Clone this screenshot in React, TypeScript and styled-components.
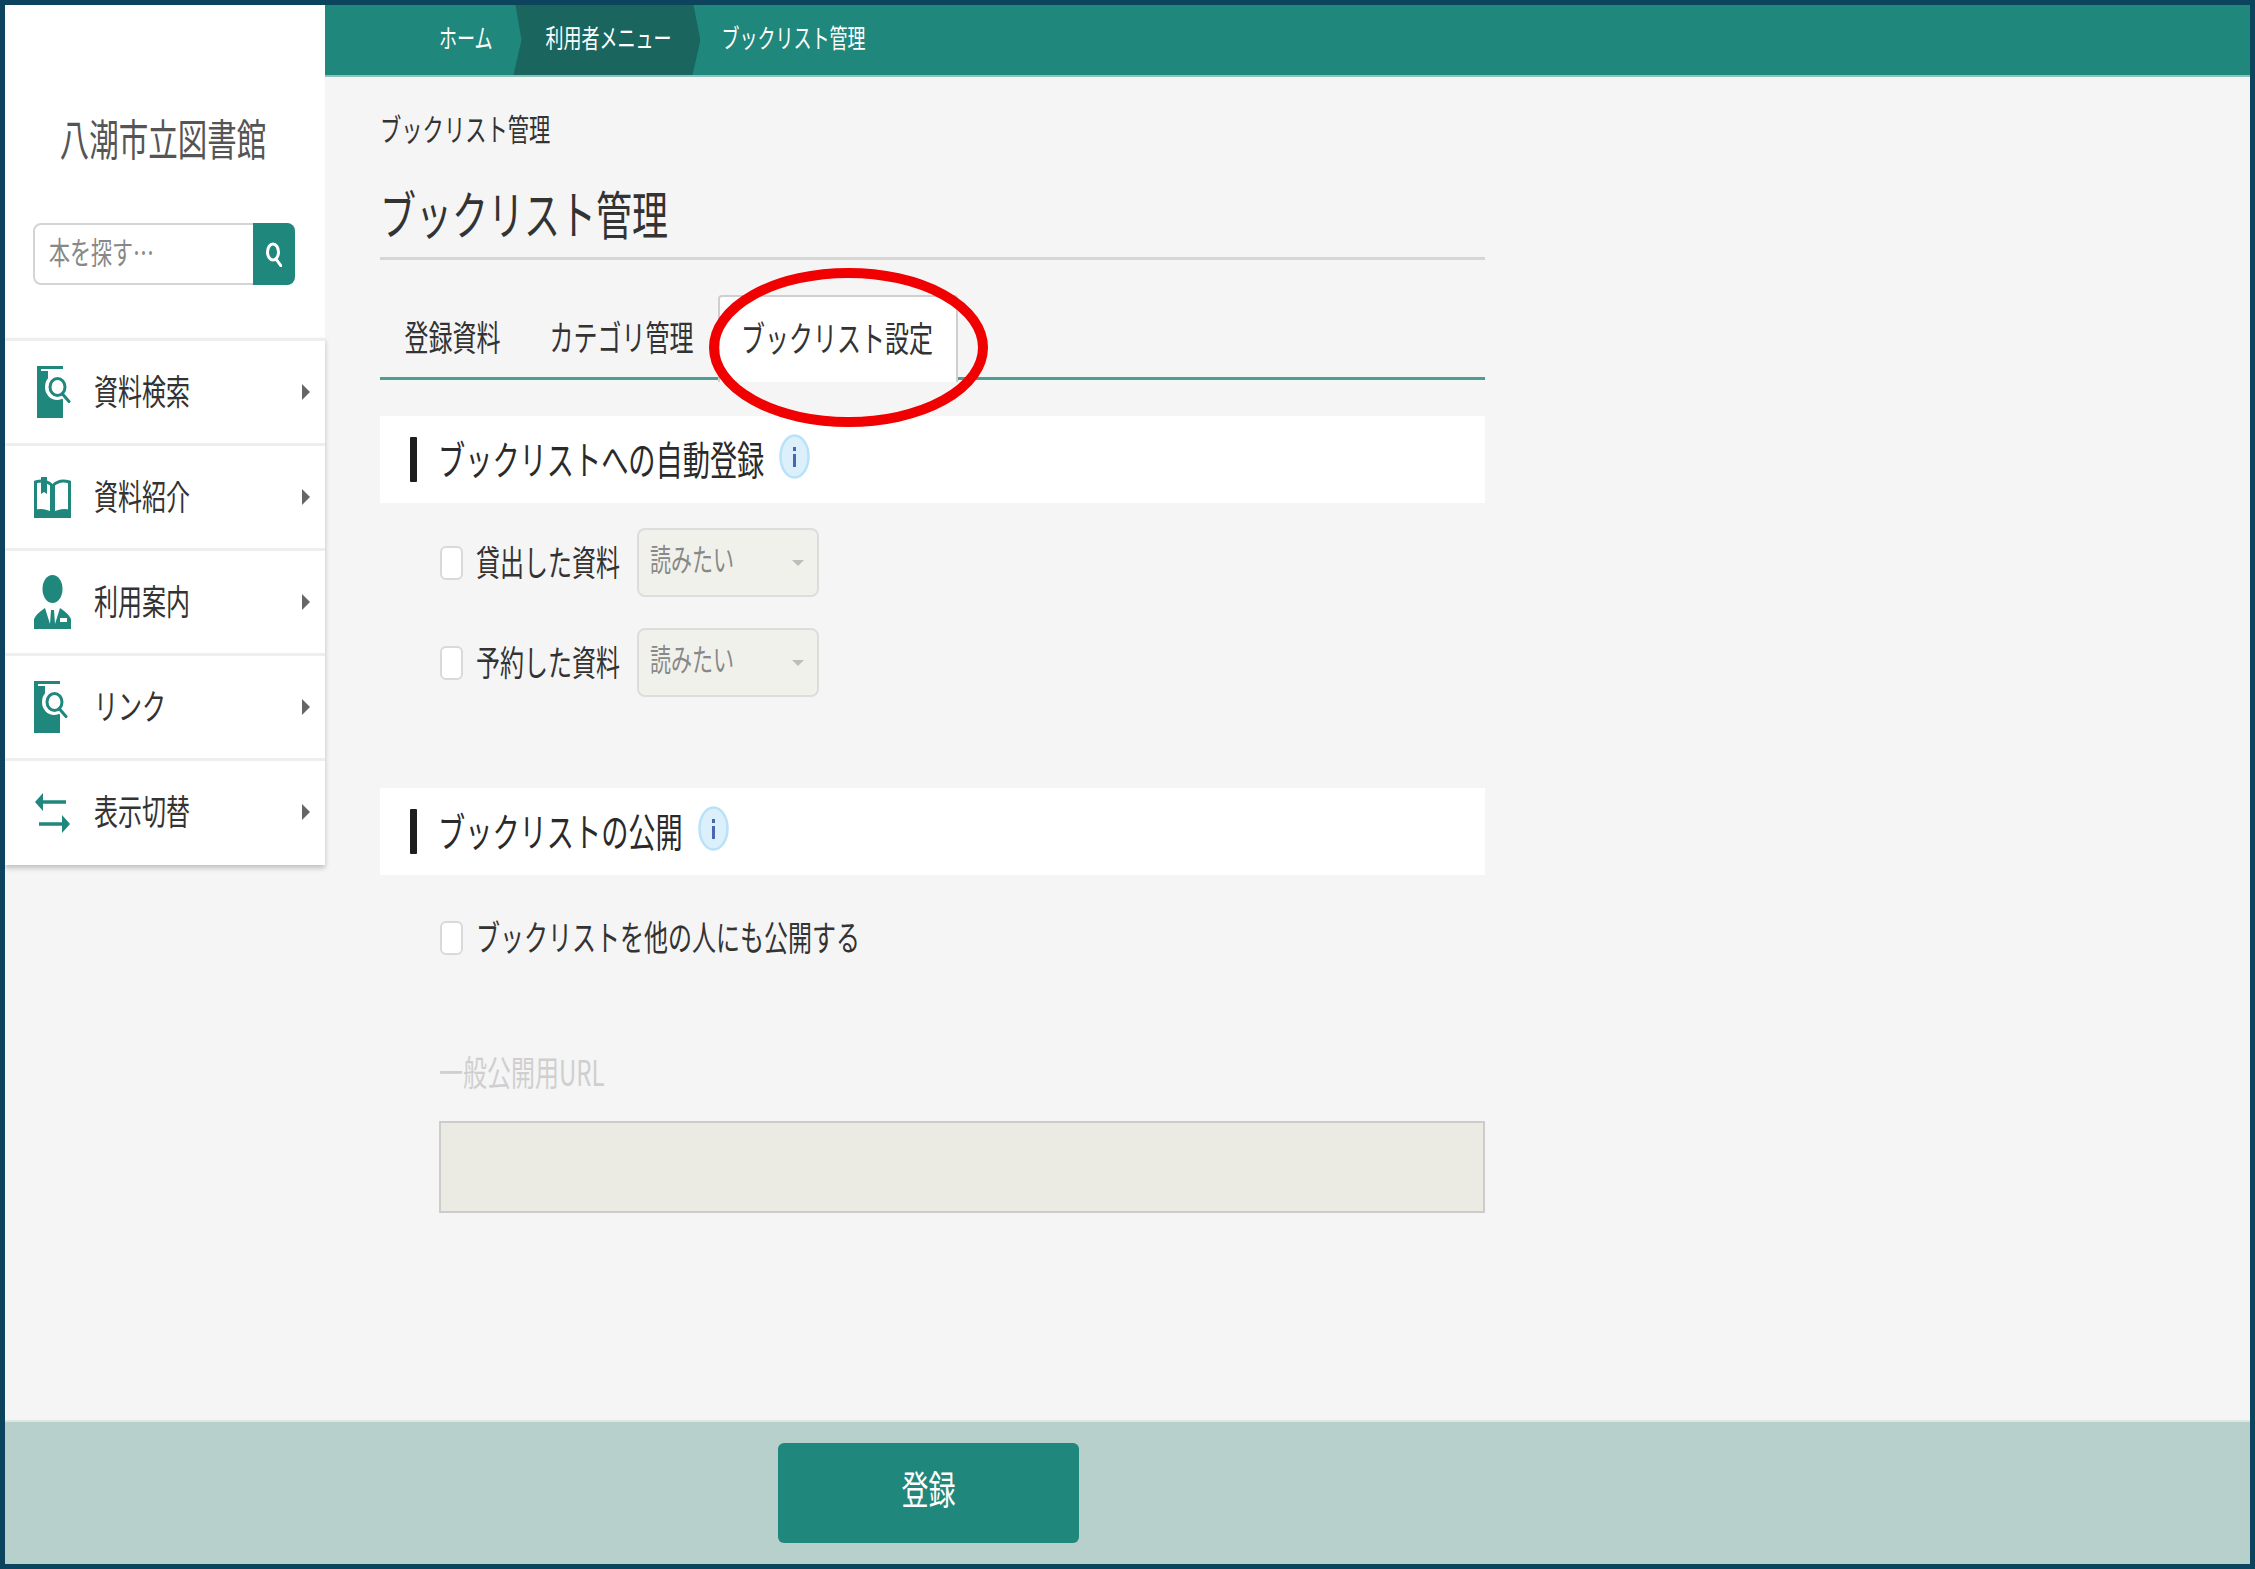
import styled, { createGlobalStyle, css } from 'styled-components';

const GlobalStyle = createGlobalStyle`
  html, body {
    margin: 0;
    padding: 0;
  }
  * {
    box-sizing: border-box;
  }
`;

// the reference is stretched vertically, so its text is taller than wide
const tall = css`
  display: inline-block;
  transform: translateY(-3px) scaleY(1.45);
  white-space: nowrap;
`;

const Frame = styled.div`
  width: 2255px;
  height: 1569px;
  display: flex;
  flex-direction: column;
  border: 5px solid #0c445e;
  background: #f5f5f5;
  font-family: "Noto Sans CJK JP", "Noto Sans", sans-serif;
  color: #333;
  overflow: hidden;
`;

const Body = styled.div`
  flex: 1;
  display: flex;
  min-height: 0;
`;

const Sidebar = styled.aside`
  width: 320px;
  flex-shrink: 0;
`;

const Brand = styled.div`
  height: 333px;
  background: #fff;
  display: flex;
  flex-direction: column;
  align-items: center;
`;

const LibraryName = styled.div`
  ${tall}
  margin: 115px 4px 0 0;
  font-size: 29.5px;
  line-height: 40px;
  color: #555;
`;

const SearchBox = styled.div`
  margin: 63px 2px 0 0;
  width: 262px;
  height: 62px;
  display: flex;
  border: 2px solid #d4d4d4;
  border-radius: 8px;
  background: #fff;
`;

const SearchHint = styled.div`
  flex: 1;
  padding-left: 14px;
  display: flex;
  align-items: center;
  font-size: 21px;
  color: #888;
  span {
    ${tall}
  }
`;

const SearchButton = styled.div`
  width: 42px;
  margin: -2px -2px -2px 0;
  display: flex;
  align-items: center;
  justify-content: center;
  background: #20877d;
  border-radius: 0 8px 8px 0;
`;

const Nav = styled.nav`
  padding-bottom: 2px;
  background: #fff;
  box-shadow: 0 3px 5px rgba(0, 0, 0, 0.22);
`;

const NavItem = styled.div`
  height: 105px;
  padding: 0 15px 0 29px;
  display: flex;
  align-items: center;
  border-top: 3px solid #eeeeee;
`;

const NavIcon = styled.div<{ $end?: boolean }>`
  width: 37px;
  display: flex;
  justify-content: ${(p) => (p.$end ? 'flex-end' : 'flex-start')};
  color: #20877d;
`;

const NavLabel = styled.span`
  ${tall}
  flex: 1;
  margin-left: 23px;
  font-size: 24px;
  color: #333;
`;

const NavArrow = styled.span`
  width: 0;
  height: 0;
  border-left: 8px solid #666;
  border-top: 8px solid transparent;
  border-bottom: 8px solid transparent;
`;

const Main = styled.main`
  flex: 1;
  min-width: 0;
`;

const TopBar = styled.div`
  height: 72px;
  padding: 0 0 0 114px;
  display: flex;
  align-items: stretch;
  background: #20877d;
  border-bottom: 2px solid #8fc1ba;
`;

const Crumb = styled.div<{ $current?: boolean }>`
  display: flex;
  align-items: center;
  padding-bottom: 2px;
  font-size: 18px;
  color: #fff;
  padding-left: ${(p) => (p.$current ? '32px' : '0')};
  padding-right: ${(p) => (p.$current ? '29px' : '21px')};
  background: ${(p) => (p.$current ? '#1a665f' : 'transparent')};
  ${(p) =>
    p.$current &&
    css`
      clip-path: polygon(2px 0, calc(100% - 7px) 0, 100% 50%, calc(100% - 8px) 100%, 0 100%, 8px 50%);
      margin-right: 21px;
    `}
  span {
    ${tall}
  }
`;

const Content = styled.div`
  width: 1160px;
  padding: 23px 0 0 55px;
`;

const PageLabel = styled.div`
  height: 60px;
  display: flex;
  align-items: center;
  font-size: 21.3px;
  span {
    ${tall}
  }
`;

const Heading = styled.h1`
  margin: 0;
  height: 100px;
  padding-top: 13px;
  display: flex;
  align-items: center;
  font-size: 36px;
  font-weight: 400;
  border-bottom: 3px solid #d6d6d6;
  span {
    ${tall}
  }
`;

const Tabs = styled.div`
  position: relative;
  margin-top: 35px;
  height: 85px;
  display: flex;
  align-items: flex-start;
  border-bottom: 3px solid #4a9e92;
`;

const Tab = styled.div<{ $active?: boolean }>`
  position: relative;
  height: 87px;
  padding: ${(p) => (p.$active ? '0 23px 0 21px' : '0 24.500px')};
  display: flex;
  align-items: center;
  font-size: 24px;
  ${(p) =>
    p.$active &&
    css`
      background: #fff;
      border: 2px solid #cfcfcf;
      border-bottom: 0;
      border-radius: 4px 4px 0 0;
    `}
  span {
    ${tall}
  }
`;

const RedCircle = styled.svg`
  position: absolute;
  left: 329px;
  top: -27px;
  width: 279px;
  height: 159px;
`;

const SectionHead = styled.div<{ $gap: number }>`
  margin-top: ${(p) => p.$gap}px;
  height: 87px;
  padding-left: 30px;
  display: flex;
  align-items: center;
  background: #fff;
`;

const SectionBar = styled.div`
  width: 7px;
  height: 45px;
  background: #1e1e1e;
  border-radius: 1px;
`;

const SectionTitle = styled.h2`
  ${tall}
  margin: 2px 15px 0 21px;
  font-size: 27.2px;
  font-weight: 400;
  color: #2a2a2a;
`;

const InfoMark = styled.svg`
  margin-bottom: 7px;
`;

const FieldRow = styled.div<{ $gap: number }>`
  margin-top: ${(p) => p.$gap}px;
  padding-left: 60px;
  display: flex;
  align-items: center;
`;

const CheckBox = styled.span`
  width: 23px;
  height: 34px;
  flex-shrink: 0;
  background: #fff;
  border: 2px solid #d9d9d9;
  border-radius: 6px;
`;

const CheckLabel = styled.label`
  ${tall}
  margin: 2px 0 0 13px;
  font-size: 24px;
`;

const SelectBox = styled.div`
  margin-left: 17px;
  width: 182px;
  height: 69px;
  padding: 0 13px 4px 11px;
  display: flex;
  align-items: center;
  justify-content: space-between;
  background: #f1f1ec;
  border: 2px solid #dddddd;
  border-radius: 8px;
  font-size: 21px;
  color: #888;
  span {
    ${tall}
  }
  &::after {
    content: '';
    margin-top: 4px;
    border-top: 6px solid #bdbdbd;
    border-left: 6px solid transparent;
    border-right: 6px solid transparent;
  }
`;

const UrlLabel = styled.div`
  margin: 102px 0 33px 59px;
  height: 30px;
  display: flex;
  align-items: center;
  font-size: 24px;
  color: #cfcfcf;
  span {
    ${tall}
  }
`;

const UrlField = styled.div`
  margin-left: 59px;
  height: 92px;
  background: #ebebe4;
  border: 2px solid #cccccc;
`;

const Footer = styled.footer`
  height: 144px;
  flex-shrink: 0;
  padding-left: 773px;
  display: flex;
  align-items: center;
  background: #b8d0cb;
  border-top: 2px solid #dfe7e5;
`;

const SubmitButton = styled.button`
  width: 301px;
  height: 100px;
  padding: 0 0 5px;
  border: 0;
  border-radius: 6px;
  background: #20877d;
  color: #fff;
  font-family: inherit;
  font-size: 27px;
  span {
    ${tall}
  }
`;

const BookSearchIcon = () => (
  <svg width="34" height="52" viewBox="0 0 34 52">
    <rect width="26" height="52" fill="currentColor" />
    <rect x="4" y="3" width="22" height="2" fill="#fff" />
    <rect x="11" y="5" width="15" height="10" fill="#fff" />
    <ellipse cx="20" cy="21" rx="12" ry="13" fill="#fff" />
    <path d="M25 28l7 8" stroke="#fff" strokeWidth="6" />
    <ellipse cx="20.5" cy="21" rx="7.5" ry="8.5" fill="#fff" stroke="currentColor" strokeWidth="3" />
    <path d="M25.5 28l6.5 7.500" stroke="currentColor" strokeWidth="3" strokeLinecap="round" />
  </svg>
);

const OpenBookIcon = () => (
  <svg width="37" height="41" viewBox="0 0 37 41">
    <path d="M0 31h37v10H0z" fill="currentColor" />
    <path
      d="M1.500 5c6-2 12-1 16 3v29c-4-3-10-4-16-3zM35.500 5c-6-2-12-1-16 3v29c4-3 10-4 16-3z"
      fill="#fff"
      stroke="currentColor"
      strokeWidth="3"
    />
    <path d="M7 0h6v17l-3-2-3 2z" fill="currentColor" />
  </svg>
);

const PersonIcon = () => (
  <svg width="37" height="54" viewBox="0 0 37 54">
    <ellipse cx="18.500" cy="14" rx="10" ry="14" fill="currentColor" />
    <path d="M0 54V44q2-5 11-11l5 16 1-14h3l1 14 5-16q9 6 11 11v10z" fill="currentColor" />
    <rect x="26" y="43" width="7" height="4" fill="#fff" />
  </svg>
);

const SwapIcon = () => (
  <svg width="37" height="43" viewBox="0 0 37 43">
    <path d="M6 11h26M5 33h27" stroke="currentColor" strokeWidth="3.500" />
    <path d="M1 11l8-9v18zM36 33l-8-9v18z" fill="currentColor" />
  </svg>
);

const SearchIcon = () => (
  <svg width="16" height="25" viewBox="0 0 16 25" fill="none" stroke="#fff" strokeWidth="3">
    <ellipse cx="7" cy="10" rx="5.500" ry="8" />
    <path d="M10 17l5 7" strokeLinecap="round" />
  </svg>
);

const InfoIcon = () => (
  <InfoMark width="31" height="45" viewBox="0 0 31 45">
    <ellipse cx="15.500" cy="22.500" rx="14" ry="21" fill="#dcf0fc" stroke="#b8e1fa" strokeWidth="2.500" />
    <rect x="14" y="20" width="3" height="13" fill="#4a66ae" />
    <rect x="14" y="13" width="3" height="4" fill="#4a66ae" />
  </InfoMark>
);

const menu = [
  { label: '資料検索', icon: <BookSearchIcon />, end: true },
  { label: '資料紹介', icon: <OpenBookIcon /> },
  { label: '利用案内', icon: <PersonIcon /> },
  { label: 'リンク', icon: <BookSearchIcon /> },
  { label: '表示切替', icon: <SwapIcon /> },
];

const listOptions = ['貸出した資料', '予約した資料'];

export default function App() {
  return (
    <Frame>
      <GlobalStyle />
      <Body>
        <Sidebar>
          <Brand>
            <LibraryName>八潮市立図書館</LibraryName>
            <SearchBox>
              <SearchHint>
                <span>本を探す…</span>
              </SearchHint>
              <SearchButton>
                <SearchIcon />
              </SearchButton>
            </SearchBox>
          </Brand>
          <Nav>
            {menu.map((item) => (
              <NavItem key={item.label}>
                <NavIcon $end={item.end}>{item.icon}</NavIcon>
                <NavLabel>{item.label}</NavLabel>
                <NavArrow />
              </NavItem>
            ))}
          </Nav>
        </Sidebar>
        <Main>
          <TopBar>
            <Crumb>
              <span>ホーム</span>
            </Crumb>
            <Crumb $current>
              <span>利用者メニュー</span>
            </Crumb>
            <Crumb>
              <span>ブックリスト管理</span>
            </Crumb>
          </TopBar>
          <Content>
            <PageLabel>
              <span>ブックリスト管理</span>
            </PageLabel>
            <Heading>
              <span>ブックリスト管理</span>
            </Heading>
            <Tabs>
              <Tab>
                <span>登録資料</span>
              </Tab>
              <Tab>
                <span>カテゴリ管理</span>
              </Tab>
              <Tab $active>
                <span>ブックリスト設定</span>
              </Tab>
              <RedCircle viewBox="0 0 279 159">
                <ellipse cx="139.500" cy="79.500" rx="134.500" ry="74.500" fill="none" stroke="#f00000" strokeWidth="10" />
              </RedCircle>
            </Tabs>
            <SectionHead $gap={36}>
              <SectionBar />
              <SectionTitle>ブックリストへの自動登録</SectionTitle>
              <InfoIcon />
            </SectionHead>
            {listOptions.map((label, i) => (
              <FieldRow key={label} $gap={i === 0 ? 25 : 31}>
                <CheckBox />
                <CheckLabel>{label}</CheckLabel>
                <SelectBox>
                  <span>読みたい</span>
                </SelectBox>
              </FieldRow>
            ))}
            <SectionHead $gap={91}>
              <SectionBar />
              <SectionTitle>ブックリストの公開</SectionTitle>
              <InfoIcon />
            </SectionHead>
            <FieldRow $gap={44}>
              <CheckBox />
              <CheckLabel>ブックリストを他の人にも公開する</CheckLabel>
            </FieldRow>
            <UrlLabel>
              <span>一般公開用URL</span>
            </UrlLabel>
            <UrlField />
          </Content>
        </Main>
      </Body>
      <Footer>
        <SubmitButton>
          <span>登録</span>
        </SubmitButton>
      </Footer>
    </Frame>
  );
}
